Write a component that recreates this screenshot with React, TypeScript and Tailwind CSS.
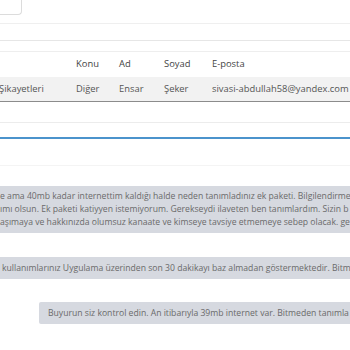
import React from "react";

const cols = [
  { w: "w-[77px]", head: "", val: "Şikayetleri" },
  { w: "w-[43px]", head: "Konu", val: "Diğer" },
  { w: "w-[45px]", head: "Ad", val: "Ensar" },
  { w: "w-[48px]", head: "Soyad", val: "Şeker" },
  { w: "w-[200px]", head: "E-posta", val: "sivasi-abdullah58@yandex.com" },
];

export default function App() {
  return (
    <div className="w-[350px] h-[350px] overflow-hidden bg-white font-['Open_Sans',sans-serif]">
      {/*--- top controls ---*/}
      <div className="h-[15px] w-[22px] border-r border-b border-[#dcdcdc] rounded-br-[4px]"></div>
      <div className="h-[9px] border-b border-[#efefef]"></div>
      <div className="h-[17px] border-b border-[#e6e6e6]"></div>
      <div className="h-[11px] border-b border-[#eeeeee]"></div>

      {/*--- table ---*/}
      <div className="ml-[-1px] w-[420px]">
        <div className="h-[25px] flex items-center text-[9.4px] text-[#444]">
          {cols.map((c, i) => (
            <div key={i} className={`${c.w} shrink-0 whitespace-nowrap`}>
              {c.head}
            </div>
          ))}
        </div>
        <div className="h-[25px] flex items-center bg-[#f2f2f2] border-b border-[#8c8c8c] text-[9.4px] text-[#555]">
          {cols.map((c, i) => (
            <div key={i} className={`${c.w} shrink-0 whitespace-nowrap`}>
              {c.val}
            </div>
          ))}
        </div>
      </div>

      <div className="h-[21px] border-b border-[#ececec]"></div>
      <div className="h-[16px] border-b-2 border-[#4b93cc]"></div>
      <div className="h-[27px] border-b border-[#f4f4f4]"></div>

      {/*--- messages ---*/}
      <div className="mt-[20px] flex flex-col text-[8.65px] text-[#6a6a6a]">
        <div className="ml-[-10px] h-[47px] bg-[#d6d9e0] flex flex-col justify-center whitespace-nowrap leading-[13px] pl-[10px]">
          <div>e ama 40mb kadar internettim kaldığı halde neden tanımladınız ek paketi. Bilgilendirme</div>
          <div>ımı olsun. Ek paketi katiyyen istemiyorum. Gerekseydi ilaveten ben tanımlardım. Sizin b</div>
          <div>aşımaya ve hakkınızda olumsuz kanaate ve kimseye tavsiye etmemeye sebep olacak. ge</div>
        </div>
        <div className="mt-[24px] ml-[-10px] h-[22px] bg-[#d6d9e0] flex items-center whitespace-nowrap pl-[12px]">
          kullanımlarınız Uygulama üzerinden son 30 dakikayı baz almadan göstermektedir. Bitm
        </div>
        <div className="mt-[23px] ml-[39px] h-[22px] bg-[#d6d9e0] rounded-l-[2px] flex items-center whitespace-nowrap pl-[9px]">
          Buyurun siz kontrol edin. An itibarıyla 39mb internet var. Bitmeden tanımla
        </div>
      </div>
    </div>
  );
}
